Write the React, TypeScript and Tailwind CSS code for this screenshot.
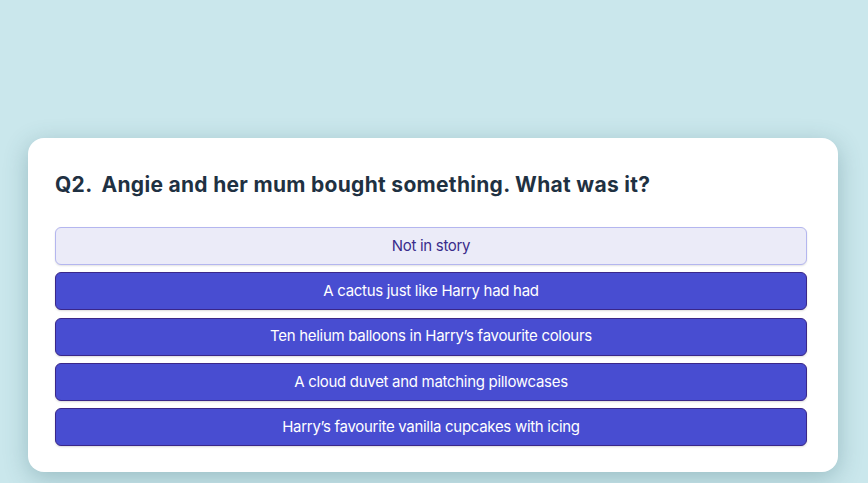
const options = [
  'A cactus just like Harry had had',
  'Ten helium balloons in Harry’s favourite colours',
  'A cloud duvet and matching pillowcases',
  'Harry’s favourite vanilla cupcakes with icing',
];

export default function App() {
  return (
    <div className="h-[483px] w-[868px] overflow-hidden bg-[#cae7ec] pt-[138px] font-['Inter',sans-serif]">
      <div className="ml-[28px] h-[334px] w-[810px] rounded-[16px] bg-white pt-[33px] pr-[31px] pl-[27px] shadow-[0_6px_24px_rgba(40,90,100,0.3)]">
        <h2 className="flex gap-[9px] text-[21px] leading-[28px] font-bold tracking-[0.3px] text-[#1f3142]">
          <span>Q2.</span>
          <span>Angie and her mum bought something. What was it?</span>
        </h2>

        <div className="mt-[28px] flex flex-col gap-[7.25px]">
          <button className="h-[38px] w-full rounded-[6px] border border-[#b4b6ef] bg-[#ebebf8] text-[15px] tracking-[-0.3px] text-[#3a2c8c] shadow-[0_1px_2px_rgba(0,0,0,0.12)]">
            Not in story
          </button>
          {options.map((o) => (
            <button
              key={o}
              className="h-[38px] w-full rounded-[6px] border border-[#3a2789] bg-[#484dd1] text-[15px] tracking-[-0.3px] text-white shadow-[0_1px_2px_rgba(0,0,0,0.15)]"
            >
              {o}
            </button>
          ))}
        </div>
      </div>
    </div>
  );
}
